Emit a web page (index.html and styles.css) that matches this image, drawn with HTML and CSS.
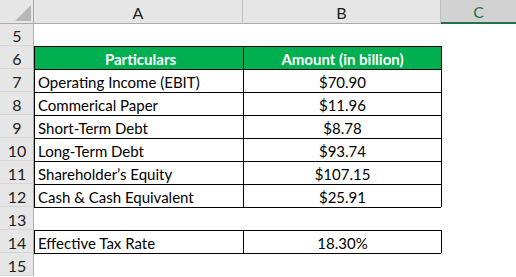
FILE: index.html
```html
<!DOCTYPE html>
<html>
<head>
<meta charset="utf-8">
<link rel="stylesheet" href="styles.css">
</head>
<body>
<div class="sheet">
  <div class="hdr corner"><svg class="tri" width="16" height="16" viewBox="0 0 16 16"><polygon points="16,0 16,16 0,16" fill="#b7b7b7"/></svg></div>
  <div class="hdr col">A</div>
  <div class="hdr col">B</div>
  <div class="hdr col sel">C</div>

  <div class="rn">5</div><div class="c"></div><div class="c"></div><div class="c"></div>

  <div class="rn">6</div><div class="c t g left">Particulars</div><div class="c t g">Amount (in billion)</div><div class="c tr"></div>
  <div class="rn">7</div><div class="c t left">Operating Income (EBIT)</div><div class="c t ctr">$70.90</div><div class="c tr"></div>
  <div class="rn">8</div><div class="c t left">Commerical Paper</div><div class="c t ctr">$11.96</div><div class="c tr"></div>
  <div class="rn">9</div><div class="c t left">Short-Term Debt</div><div class="c t ctr">$8.78</div><div class="c tr"></div>
  <div class="rn">10</div><div class="c t left">Long-Term Debt</div><div class="c t ctr">$93.74</div><div class="c tr"></div>
  <div class="rn">11</div><div class="c t left">Shareholder’s Equity</div><div class="c t ctr">$107.15</div><div class="c tr"></div>
  <div class="rn">12</div><div class="c t left">Cash &amp; Cash Equivalent</div><div class="c t ctr">$25.91</div><div class="c tr"></div>
  <div class="rn">13</div><div class="c tb"></div><div class="c tb"></div><div class="c"></div>
  <div class="rn">14</div><div class="c t left">Effective Tax Rate</div><div class="c t ctr">18.30%</div><div class="c tr"></div>
  <div class="rn">15</div><div class="c tb"></div><div class="c tb"></div><div class="c"></div>
</div>
</body>
</html>
```

FILE: styles.css
```css
html, body {
  margin: 0;
  padding: 0;
  background: #ffffff;
}
body {
  width: 516px;
  height: 277px;
  overflow: hidden;
  font-family: Lato, "Liberation Sans", sans-serif;
  font-size: 15px;
  color: #000;
}
.sheet {
  display: grid;
  grid-template-columns: 34px 209px 198px 75px;
  grid-template-rows: 24px 22px repeat(10, 23px);
}
.hdr {
  background: #e6e6e6;
  border-bottom: 1px solid #ababab;
  box-sizing: border-box;
  display: flex;
  align-items: center;
  justify-content: center;
  color: #222;
  font-size: 16px;
  padding-top: 1px;
}
.corner {
  border-right: 1px solid #ababab;
  position: relative;
}
.tri {
  position: absolute;
  left: 15px;
  top: 5px;
}
.col {
  border-right: 1px solid #c0c0c0;
}
.sel {
  background: #d2d2d2;
  color: #217346;
  border-bottom: 2px solid #217346;
  border-right: none;
  border-left: none;
}
.rn {
  background: #e6e6e6;
  border-right: 1px solid #ababab;
  border-bottom: 1px solid #d6d6d6;
  box-sizing: border-box;
  display: flex;
  align-items: center;
  justify-content: center;
  color: #222;
  font-size: 16px;
  padding-top: 2px;
  padding-left: 1px;
}
.c {
  box-sizing: border-box;
  display: flex;
  align-items: center;
  white-space: nowrap;
  padding-top: 2px;
}
.t {
  border-top: 1px solid #000;
  border-left: 1px solid #000;
}
.tr {
  border-left: 1px solid #000;
}
.tb {
  border-top: 1px solid #000;
}
.left {
  padding-left: 3px;
}
.ctr {
  justify-content: center;
}
.g {
  background: #00b050;
  color: #fff;
  font-weight: bold;
  justify-content: center;
}
```
